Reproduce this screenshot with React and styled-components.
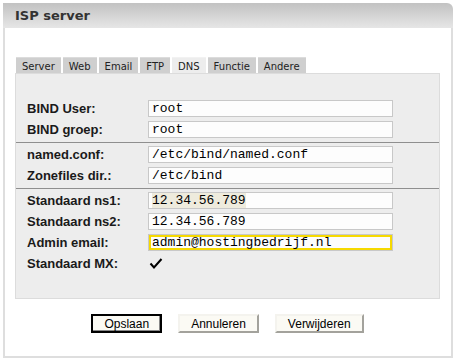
import styled, { createGlobalStyle } from 'styled-components';

const GlobalStyle = createGlobalStyle`
	html, body {
		margin: 0;
		padding: 0;
		background: #fff;
	}
`;

const tabs = ['Server', 'Web', 'Email', 'FTP', 'DNS', 'Functie', 'Andere'];

const groups = [
	[
		{ label: 'BIND User:', value: 'root' },
		{ label: 'BIND groep:', value: 'root' },
	],
	[
		{ label: 'named.conf:', value: '/etc/bind/named.conf' },
		{ label: 'Zonefiles dir.:', value: '/etc/bind' },
	],
	[
		{ label: 'Standaard ns1:', value: '12.34.56.789', marked: true },
		{ label: 'Standaard ns2:', value: '12.34.56.789' },
		{ label: 'Admin email:', value: 'admin@hostingbedrijf.nl', focused: true },
		{ label: 'Standaard MX:', check: true },
	],
];

const App = () => {
	return (
		<>
			<GlobalStyle />
			<Window>
				<Header>ISP server</Header>
				<Body>
					<TabBar>
						{tabs.map((t) => (
							<Tab key={t} $active={t === 'DNS'}>
								{t}
							</Tab>
						))}
					</TabBar>
					<Panel>
						{groups.map((rows, gi) => (
							<Group key={gi} $last={gi === groups.length - 1}>
								{rows.map((r) => (
									<Row key={r.label}>
										<Label>{r.label}</Label>
										{r.check ? (
											<Check viewBox="0 0 14 13">
												<path d="M1.5 6.5 L5 10.5 L12.5 2" fill="none" stroke="#000" strokeWidth="2" />
											</Check>
										) : (
											<Field $focused={r.focused}>
												{r.marked ? <Mark>{r.value}</Mark> : r.value}
											</Field>
										)}
									</Row>
								))}
							</Group>
						))}
					</Panel>
					<Buttons>
						<Button $primary>Opslaan</Button>
						<Button>Annuleren</Button>
						<Button>Verwijderen</Button>
					</Buttons>
				</Body>
			</Window>
		</>
	);
};

export default App;

const Window = styled.div`
	margin: 3px 0 0 3px;
	width: 450px;
	box-sizing: border-box;
	font-family: 'DejaVu Sans', Verdana, sans-serif;
`;

const Header = styled.div`
	height: 25px;
	line-height: 26px;
	padding-left: 12px;
	border-top-right-radius: 6px;
	background: linear-gradient(to bottom, #c2c2c2, #e6e6e6);
	font-size: 13px;
	font-weight: bold;
	color: #333;
`;

const Body = styled.div`
	border: 2px solid #dedede;
	border-top: none;
	padding: 29px 11px 23px 10px;
`;

const TabBar = styled.div`
	display: flex;
	gap: 2px;
	height: 16px;
	margin-left: 1px;
`;

const Tab = styled.div`
	padding: 0 6px;
	height: 16px;
	line-height: 17px;
	font-size: 10px;
	color: #222;
	box-sizing: border-box;
	border-top: 1px solid ${(p) => (p.$active ? '#f2f2f2' : '#dcdcdc')};
	background: ${(p) => (p.$active ? '#ededed' : '#cfcfcf')};
`;

const Panel = styled.div`
	background: #ededed;
	border: 1px solid #dcdcdc;
	padding: 23px 0 22px;
`;

const Group = styled.div`
	padding: 1px 0 2px;
	border-bottom: ${(p) => (p.$last ? 'none' : '1px solid #8f8f8f')};
`;

const Row = styled.div`
	display: grid;
	grid-template-columns: 121px 245px;
	align-items: center;
	height: 21px;
	padding-left: 11px;
`;

const Label = styled.span`
	font-family: 'Liberation Sans', Arial, sans-serif;
	font-weight: bold;
	font-size: 13px;
	color: #1a1a1a;
`;

const Field = styled.div`
	height: 17px;
	box-sizing: border-box;
	border: 1px solid #c8c8c8;
	background: #fdfdfd;
	padding-left: 3px;
	font-family: 'Liberation Mono', 'Courier New', monospace;
	font-size: 13px;
	line-height: 15px;
	color: #000;
	white-space: nowrap;
	overflow: hidden;
	box-shadow: ${(p) => (p.$focused ? 'inset 0 0 0 2px #f6d900' : 'none')};
`;

const Mark = styled.span`
	background: #eeebdd;
`;

const Check = styled.svg`
	width: 14px;
	height: 13px;
	margin-left: 1px;
`;

const Buttons = styled.div`
	display: flex;
	justify-content: center;
	gap: 16px;
	margin-top: 15px;
`;

const Button = styled.button`
	height: 19px;
	padding: 0 11px;
	font-family: 'Liberation Sans', Arial, sans-serif;
	font-size: 12px;
	color: #000;
	background: #fbfaf4;
	border: ${(p) => (p.$primary ? '2px solid #000' : '2px solid')};
	border-color: ${(p) =>
		p.$primary ? '#000' : '#f4f3ee #a3a29c #a3a29c #f4f3ee'};
	box-shadow: ${(p) => (p.$primary ? 'inset -1px -1px 0 #888' : 'none')};
	cursor: pointer;
`;
